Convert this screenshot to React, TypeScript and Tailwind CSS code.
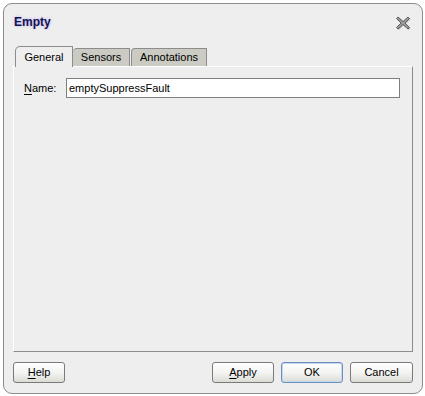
import React from 'react';

const font = { fontFamily: '"Liberation Sans", Arial, sans-serif' };

const Button = ({ label, mnemonic, isDefault, width }: { label: string; mnemonic?: number; isDefault?: boolean; width: string }) => {
  const text =
    mnemonic === undefined ? (
      label
    ) : (
      <>
        {label.slice(0, mnemonic)}
        <span className="underline underline-offset-2">{label[mnemonic]}</span>
        {label.slice(mnemonic + 1)}
      </>
    );
  return (
    <button
      className={`${width} h-[21px] rounded-[3px] border text-[11px] text-black flex items-center justify-center bg-gradient-to-b from-white via-[#f4f4f2] to-[#dcdcd6] ${
        isDefault ? 'border-[#6d8fbe] shadow-[inset_0_0_0_1px_#c4d7f2]' : 'border-[#7a7a7a]'
      }`}
    >
      {text}
    </button>
  );
};

const App = () => {
  return (
    <div className="w-[425px] h-[396px] bg-white pt-[3px] pl-[3px]" style={font}>
      <div className="w-[420px] h-[391px] bg-[#eeeeee] border border-[#8c8c8c] rounded-[9px] flex flex-col px-[9px]">
        {/* Title */}
        <div className="h-[41px] flex items-start justify-between pt-[11px]">
          <span className="text-[12px] font-bold text-[#14144a] [text-shadow:0_0_3px_#b3a6ff] leading-[14px] pl-[1px]">
            Empty
          </span>
          <svg width="16" height="16" viewBox="0 0 16 16" className="mr-[2px]">
            <path d="M3 2 L8 6.5 L13 2 L14.5 3.5 L10 8 L14.5 12.5 L13 14 L8 9.5 L3 14 L1.5 12.5 L6 8 L1.5 3.5 Z" fill="#6a6a6a" stroke="#4a4a4a" strokeWidth="0.8" transform="translate(0.6 0.6)" opacity="0.35" />
            <path d="M3 2 L8 6.5 L13 2 L14.5 3.5 L10 8 L14.5 12.5 L13 14 L8 9.5 L3 14 L1.5 12.5 L6 8 L1.5 3.5 Z" fill="#9a9a9a" stroke="#555555" strokeWidth="0.9" />
          </svg>
        </div>

        {/* Tabs */}
        <div className="flex items-end h-[21px] pl-[2px] text-[11px] text-black">
          <div className="relative z-10 w-[58px] h-[21px] -mb-[1px] bg-[#eeeeee] border-t border-l border-r border-[#8c8c8c] rounded-tl-[5px] flex items-center justify-center">
            General
          </div>
          <div className="w-[57px] h-[18px] bg-[#cbcbc3] border-t border-r border-[#8c8c8c] rounded-tl-[4px] flex items-center justify-center">
            Sensors
          </div>
          <div className="w-[76px] h-[18px] ml-[1px] bg-[#cbcbc3] border-t border-l border-r border-[#8c8c8c] rounded-tl-[4px] flex items-center justify-center">
            Annotations
          </div>
        </div>

        {/* Panel */}
        <div className="h-[286px] border-t border-l border-white border-r border-b border-r-[#8c8c8c] border-b-[#8c8c8c] pt-[11px] pl-[10px] pr-[12px]">
          <div className="flex items-center text-[11px] text-black">
            <span className="w-[42px]">
              <span className="underline underline-offset-2">N</span>ame:
            </span>
            <div className="flex-1 h-[20px] bg-white border border-[#7f7f7f] flex items-center px-[2px]">
              emptySuppressFault
            </div>
          </div>
        </div>

        {/* Buttons */}
        <div className="flex items-center mt-[10px]">
          <Button label="Help" mnemonic={0} width="w-[52px]" />
          <div className="flex-1" />
          <div className="flex gap-[7px]">
            <Button label="Apply" mnemonic={0} width="w-[62px]" />
            <Button label="OK" isDefault width="w-[62px]" />
            <Button label="Cancel" width="w-[63px]" />
          </div>
        </div>
      </div>
    </div>
  );
};

export default App;
